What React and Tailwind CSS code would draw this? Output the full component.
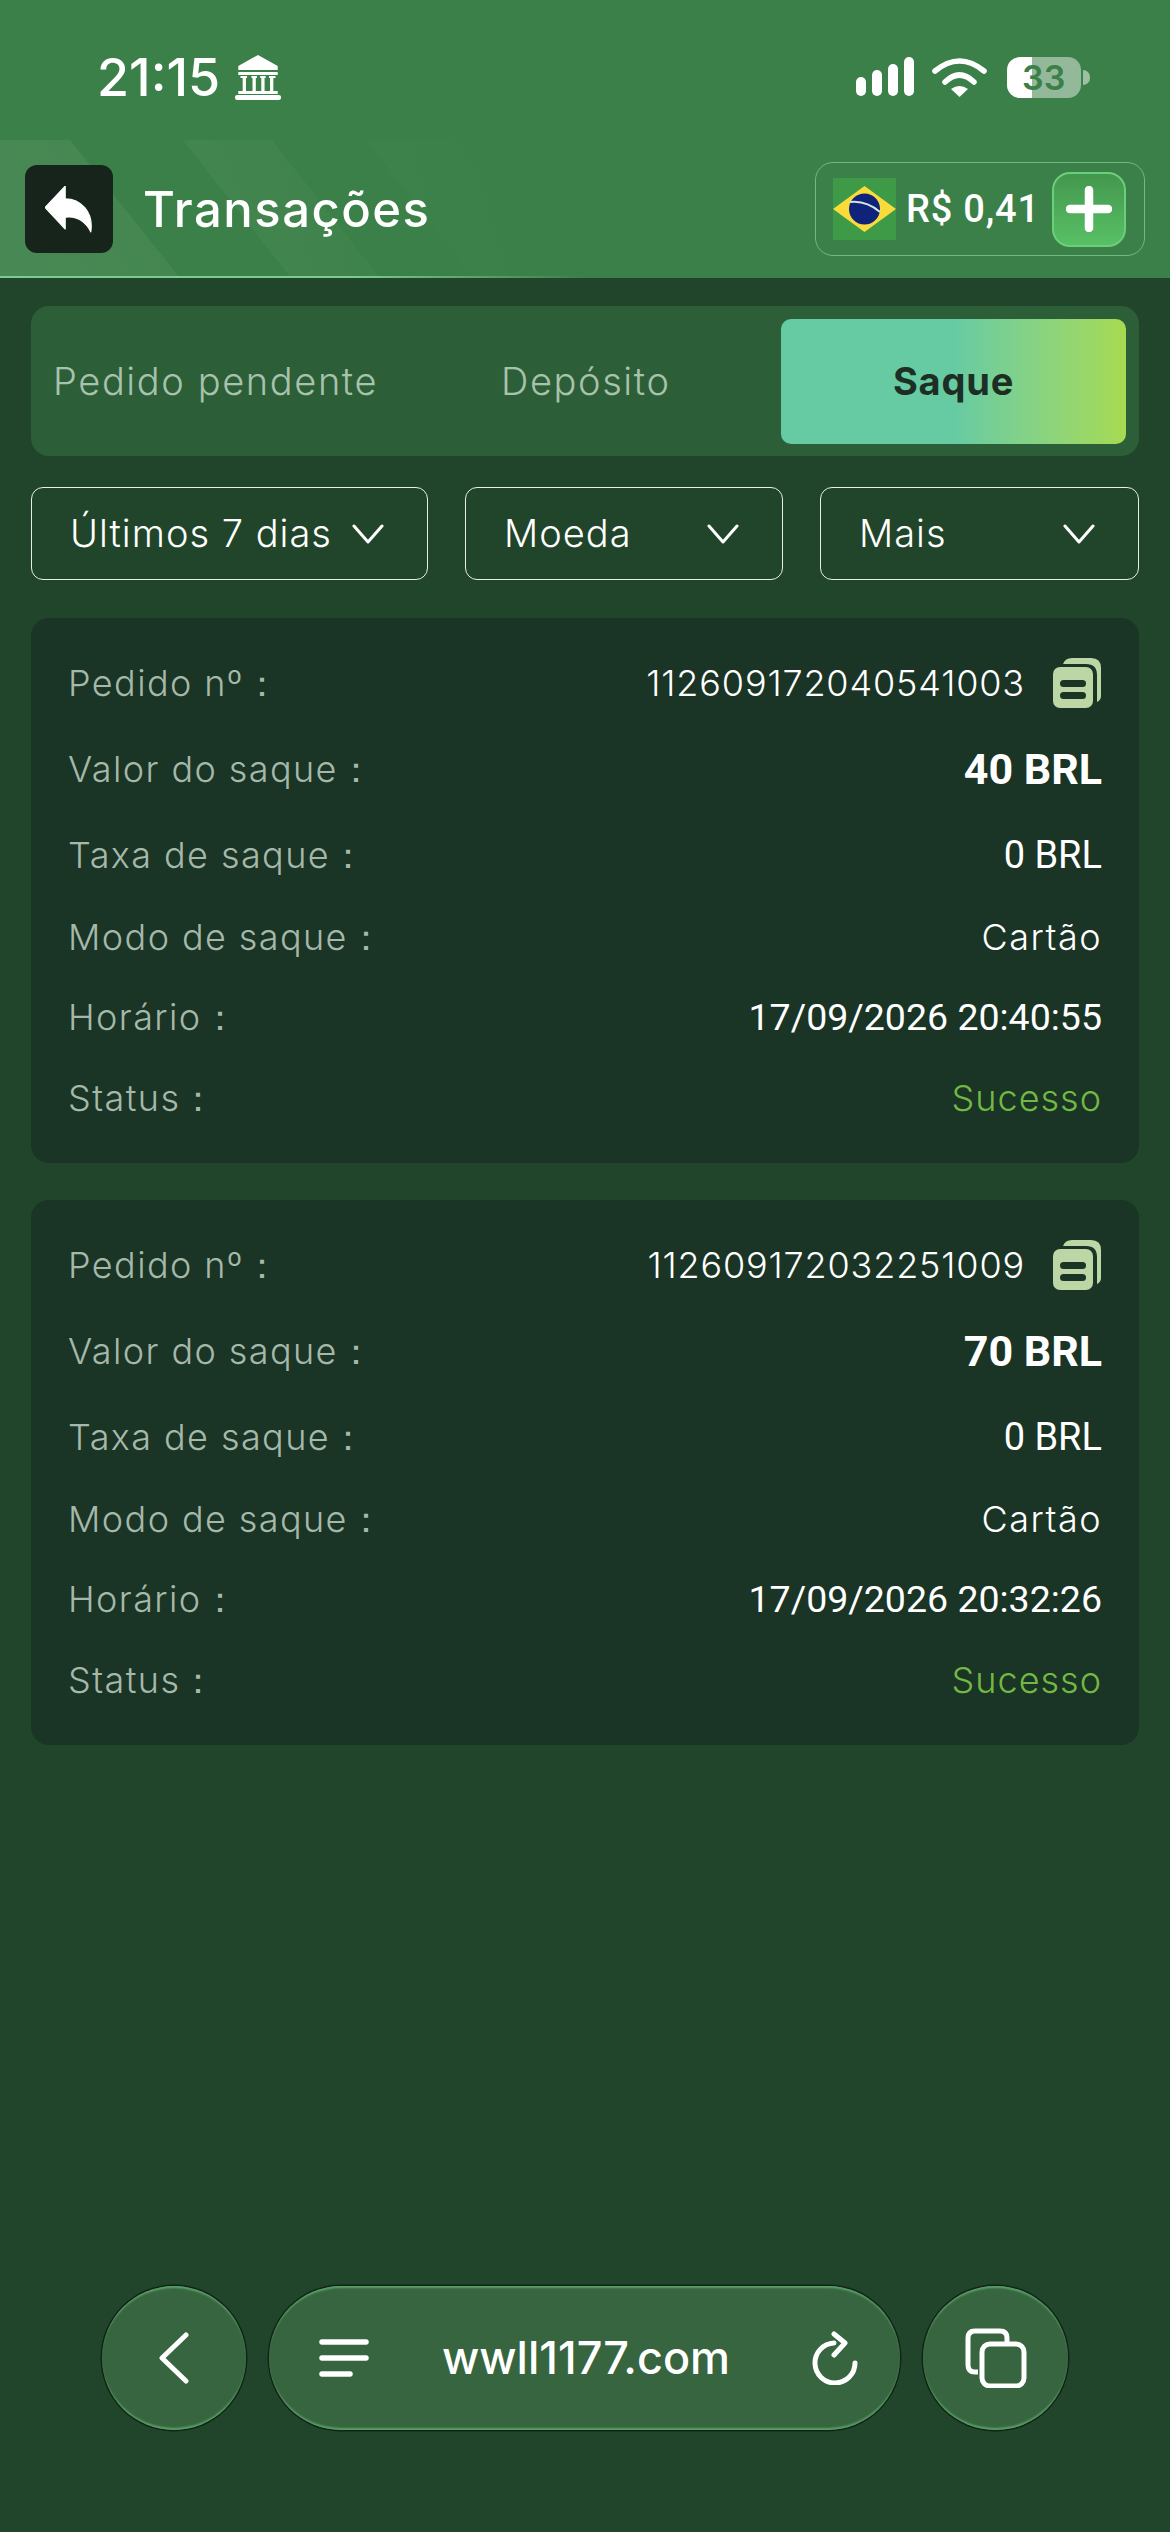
const orders = [
  { id: '112609172040541003', amount: '40 BRL', time: '17/09/2026 20:40:55' },
  { id: '112609172032251009', amount: '70 BRL', time: '17/09/2026 20:32:26' },
];

const Chevron = () => (
  <svg width="32" height="20" viewBox="0 0 32 20" fill="none" stroke="white" strokeWidth="3" strokeLinecap="round" strokeLinejoin="round" className="shrink-0">
    <path d="M2 2 L16 18 L30 2" />
  </svg>
);

const CopyIcon = () => (
  <svg width="50" height="50" viewBox="0 0 50 50" className="shrink-0">
    <path d="M11 6 Q13 0 20 0 H39 Q49 0 49 10 V38 Q49 42 45 44 V17 Q45 6 34 6 Z" fill="#bdd6a5" />
    <rect x="1" y="9" width="40" height="41" rx="7" fill="#bdd6a5" />
    <rect x="8" y="22" width="26" height="7" rx="3.5" fill="#1a3425" />
    <rect x="8" y="34" width="26" height="7" rx="3.5" fill="#1a3425" />
  </svg>
);

const Row = ({ label, height, children }) => (
  <div className={`flex items-center justify-between ${height}`}>
    <span className="[font-family:Inter,sans-serif] text-[36px] font-light tracking-[1.4px] text-[#a5b8aa] whitespace-nowrap">{label}</span>
    {children}
  </div>
);

const OrderCard = ({ order }) => (
  <div className="rounded-[18px] bg-[#1a3425] px-[37px] pt-[22px] pb-[25px]">
    <Row label="Pedido nº：" height="h-[86px]">
      <div className="flex items-center gap-[27px]">
        <span className="[font-family:Inter,sans-serif] text-[36px] font-light tracking-[0.85px] text-white">{order.id}</span>
        <CopyIcon />
      </div>
    </Row>
    <Row label="Valor do saque：" height="h-[86px]">
      <span className="[font-family:Roboto,sans-serif] text-[43px] font-bold text-white">{order.amount}</span>
    </Row>
    <Row label="Taxa de saque：" height="h-[86px]">
      <span className="[font-family:Roboto,sans-serif] text-[38px] text-white">0 BRL</span>
    </Row>
    <Row label="Modo de saque：" height="h-[78px]">
      <span className="[font-family:Inter,sans-serif] text-[36px] font-light tracking-[1.5px] text-white">Cartão</span>
    </Row>
    <Row label="Horário：" height="h-[82px]">
      <span className="[font-family:Roboto,sans-serif] text-[37.500px] text-white">{order.time}</span>
    </Row>
    <Row label="Status：" height="h-[80px]">
      <span className="[font-family:Inter,sans-serif] text-[36px] font-light tracking-[1px] text-[#72b943]">Sucesso</span>
    </Row>
  </div>
);

const Filter = ({ label, width }) => (
  <div className={`flex h-[93px] items-center justify-between rounded-[12px] border-[1.5px] border-[#e8eee9] pl-[38px] pr-[43px] ${width}`}>
    <span className="[font-family:Inter,sans-serif] text-[38px] font-light tracking-[1px] text-white whitespace-nowrap">{label}</span>
    <Chevron />
  </div>
);

const glass = 'bg-[#37653f] shadow-[0_0_0_1.5px_#122418,inset_0_3px_2px_-1px_#5aa268,inset_0_-3px_2px_-1px_#5aa268]';

export default function App() {
  return (
    <div className="relative flex h-[2532px] w-[1170px] flex-col overflow-hidden bg-[#21452a] [font-family:Inter,sans-serif]">
      <header className="relative h-[278px] bg-[#3b8048]">
        {/* faint diagonal stripes behind the title bar */}
        <svg className="absolute left-0 top-[140px]" width="1170" height="138" viewBox="0 0 1170 138">
          <defs>
            <linearGradient id="stripe" gradientUnits="userSpaceOnUse" x1="0" y1="138" x2="500" y2="0">
              <stop offset="0" stopColor="#ffffff" stopOpacity="0.07" />
              <stop offset="1" stopColor="#ffffff" stopOpacity="0" />
            </linearGradient>
          </defs>
          <polygon points="0,0 70,0 180,138 0,138" fill="url(#stripe)" />
          <polygon points="183,0 272,0 380,138 291,138" fill="url(#stripe)" />
          <polygon points="366,0 455,0 560,138 474,138" fill="url(#stripe)" />
        </svg>
        <div className="absolute bottom-0 left-0 h-[2px] w-full bg-gradient-to-r from-[#7fcb8e] via-[#7fcb8e] via-30% to-transparent to-50%" />

        <div className="relative flex h-[162px] items-start justify-between pl-[97px] pr-[79px] pt-[55px]">
          <div className="flex items-start gap-[15px]">
            <span className="text-[52px] font-medium leading-[45px] text-white">21:15</span>
            <svg width="46" height="45" viewBox="0 0 42 45" fill="white" preserveAspectRatio="none">
              <path d="M21 0 L39 11 V15 H3 V11 Z" />
              <rect x="3" y="17" width="36" height="3" />
              <rect x="5" y="21" width="6" height="2" />
              <rect x="7" y="23" width="3" height="13" />
              <rect x="15" y="21" width="5" height="2" />
              <rect x="16" y="23" width="3" height="13" />
              <rect x="23" y="21" width="5" height="2" />
              <rect x="24" y="23" width="3" height="13" />
              <rect x="31" y="21" width="6" height="2" />
              <rect x="32" y="23" width="3" height="13" />
              <rect x="3" y="36" width="36" height="3" />
              <rect x="0" y="40" width="42" height="5" rx="2" />
            </svg>
          </div>
          <div className="flex items-start pt-[2px]">
            <svg width="58" height="39" viewBox="0 0 58 39" fill="white">
              <rect x="0" y="20" width="10" height="19" rx="5" />
              <rect x="16" y="13" width="10" height="26" rx="5" />
              <rect x="32" y="7" width="10" height="32" rx="5" />
              <rect x="48" y="0" width="10" height="39" rx="5" />
            </svg>
            <svg width="55" height="40" viewBox="0 0 55 40" fill="none" stroke="white" strokeWidth="5.500" strokeLinecap="round" className="ml-[18px]">
              <path d="M3 14 Q27.500 -6 52 14" />
              <path d="M13 25 Q27.500 11 42 25" />
              <path d="M27.500 40 L19 32 Q27.500 26 36 32 Z" fill="white" stroke="none" />
            </svg>
            <div className="relative ml-[20px] flex h-[41px] w-[84px] items-start">
              <div className="flex h-full w-[74px] overflow-hidden rounded-[13px]">
                <div className="w-[25px] bg-white" />
                <div className="flex-1 bg-white/45" />
              </div>
              <div className="ml-[2px] mt-[13px] h-[15px] w-[7px] rounded-r-full bg-white/50" />
              <span className="absolute left-[15px] top-0 text-[34px] font-semibold leading-[41px] text-[#3b8048]">33</span>
            </div>
          </div>
        </div>

        <div className="relative flex items-start justify-between pl-[25px] pr-[25px]">
          <div className="mt-[3px] flex h-[88px] items-center">
            <div className="flex h-[88px] w-[88px] items-center justify-center rounded-[12px] bg-[#16241c]">
              <svg width="49" height="47" viewBox="0 0 46 48" fill="white" preserveAspectRatio="none">
                <path d="M19 0 L0 22 L19 44 V32 C31 30 39 38 43 47 C46 26 33 13 19 13 Z" strokeLinejoin="round" stroke="white" strokeWidth="1" />
              </svg>
            </div>
            <h1 className="ml-[30px] text-[49px] font-medium leading-none tracking-[1.5px] text-white">Transações</h1>
          </div>
          <div className="flex h-[94px] w-[330px] items-center rounded-[18px] border-[1.5px] border-[#6fbd7e] pl-[17px] pr-[18px]">
            <svg width="63" height="62" viewBox="0 0 63 62" className="shrink-0">
              <rect width="63" height="62" fill="#3f9a47" />
              <polygon points="0,31 31.500,8 63,31 31.500,54" fill="#f9dc3c" />
              <circle cx="31.500" cy="31" r="15.500" fill="#10237a" />
              <path d="M17 24 Q33 22 47 34" stroke="#d7e2e6" strokeWidth="2" fill="none" />
            </svg>
            <span className="ml-[10px] [font-family:Roboto,sans-serif] text-[38px] font-medium tracking-[0.8px] text-white whitespace-nowrap">R$ 0,41</span>
            <div className="ml-auto flex h-[75px] w-[74px] shrink-0 items-center justify-center rounded-[18px] border-2 border-[#69cf78] bg-gradient-to-b from-[#43974e] to-[#59c066]">
              <svg width="46" height="46" viewBox="0 0 46 46" stroke="white" strokeWidth="8.500" strokeLinecap="round">
                <path d="M23 4 V42 M4 23 H42" />
              </svg>
            </div>
          </div>
        </div>
      </header>

      <main className="flex flex-1 flex-col px-[31px] pt-[28px]">
        <div className="flex h-[150px] items-center rounded-[18px] bg-[#2c5f37] pl-[22px] pr-[13px]">
          <span className="w-[448px] shrink-0 text-[38px] font-light tracking-[1.6px] text-[#a8c2ae]">Pedido pendente</span>
          <span className="w-[280px] shrink-0 text-[38px] font-light tracking-[1.6px] text-[#a8c2ae]">Depósito</span>
          <div className="flex h-[125px] w-[345px] shrink-0 items-center justify-center rounded-[10px] bg-gradient-to-r from-[#66cba3] from-50% to-[#a6da4f] text-[38px] font-bold tracking-[0.8px] text-[#1d2f25]">Saque</div>
        </div>

        <div className="mt-[31px] flex justify-between">
          <Filter label="Últimos 7 dias" width="w-[397px]" />
          <Filter label="Moeda" width="w-[318px]" />
          <Filter label="Mais" width="w-[319px]" />
        </div>

        <div className="mt-[38px] flex flex-col gap-[37px]">
          {orders.map((o) => <OrderCard key={o.id} order={o} />)}
        </div>
      </main>

      <nav className="flex items-center gap-[23px] pb-[102px] pl-[102px]">
        <div className={`flex h-[144px] w-[144px] items-center justify-center rounded-full ${glass}`}>
          <svg width="30" height="52" viewBox="0 0 30 52" fill="none" stroke="white" strokeWidth="5" strokeLinecap="round" strokeLinejoin="round">
            <path d="M27 3 L3 26 L27 49" />
          </svg>
        </div>
        <div className={`flex h-[144px] w-[631px] items-center rounded-full pl-[50px] pr-[42px] ${glass}`}>
          <svg width="50" height="38" viewBox="0 0 50 38" stroke="white" strokeWidth="5.500" strokeLinecap="round">
            <path d="M3 3 H47 M3 19 H47 M3 35 H31" />
          </svg>
          <span className="ml-[73px] flex-1 text-[45px] font-medium text-white">wwll1177.com</span>
          <svg width="46" height="54" viewBox="0 0 46 54" fill="none" stroke="white" strokeWidth="5" strokeLinecap="round" strokeLinejoin="round">
            <path d="M22 12 A20 20 0 1 0 43 32" />
            <path d="M22 3 L33 12 L22 24" />
          </svg>
        </div>
        <div className={`flex h-[144px] w-[145px] items-center justify-center rounded-full ${glass}`}>
          <svg width="62" height="60" viewBox="0 0 62 60" fill="none" stroke="white" strokeWidth="5">
            <path d="M13 44 H10 Q3 44 3 37 V10 Q3 3 10 3 H35 Q42 3 42 10 V16" />
            <rect x="17" y="16" width="42" height="42" rx="8" />
          </svg>
        </div>
      </nav>
    </div>
  );
}
